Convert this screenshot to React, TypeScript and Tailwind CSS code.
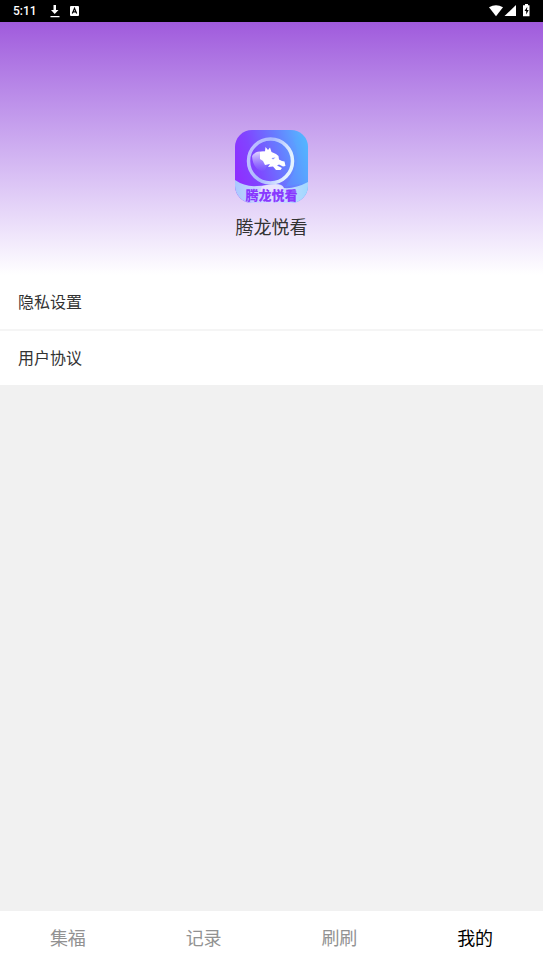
const menuItems = ["隐私设置", "用户协议"];

const tabs = [
  { label: "集福", active: false },
  { label: "记录", active: false },
  { label: "刷刷", active: false },
  { label: "我的", active: true },
];

function StatusBar() {
  return (
    <div className="flex h-[22px] shrink-0 items-center justify-between bg-black px-3 text-white">
      <div className="flex items-center">
        <span className="w-9 pl-px font-['Roboto',sans-serif] text-[12px] leading-6 font-medium">5:11</span>
        <svg width="12" height="14" viewBox="0 0 12 14" fill="currentColor" aria-hidden="true">
          <path d="M5.500 1h2.500v5h2.500L6.700 10 3 6h2.500zM2.500 12h9v1.200h-9z" />
        </svg>
        <svg className="ml-2.5" width="9" height="10" viewBox="0 0 9 10" aria-hidden="true">
          <rect width="9" height="10" rx="1" fill="currentColor" />
          <path d="M2.300 7.600 4.500 2.300 6.700 7.600M3.200 5.900H5.800" fill="none" stroke="#000" strokeWidth="1.200" />
        </svg>
      </div>
      <svg width="44" height="14" viewBox="0 0 44 14" fill="currentColor" aria-hidden="true">
        <path d="M2 3.300Q9 -.9 16 3.300L9 12.200z" />
        <path d="M29 1v11H17.500z" />
        <path d="M38 0h3v1.200h1.500v11H36V1.200h2z" />
        <path d="M40.300 2.800 37.500 7h1.700v3.600l2.500-4.500H40z" fill="#000" />
      </svg>
    </div>
  );
}

function Logo() {
  return (
    <svg width="73" height="73" viewBox="0 0 73 73" role="img" aria-label="腾龙悦看">
      <defs>
        <linearGradient id="tile" x1="0" y1="0.500" x2="1" y2="0.200">
          <stop offset="0" stopColor="#8e30ff" />
          <stop offset="0.250" stopColor="#8144ff" />
          <stop offset="0.620" stopColor="#677cff" />
          <stop offset="1" stopColor="#55b8ff" />
        </linearGradient>
        <linearGradient id="ring" x1="0" y1="0" x2="1" y2="0.300">
          <stop offset="0" stopColor="#c4c0ff" />
          <stop offset="0.500" stopColor="#a9baff" />
          <stop offset="1" stopColor="#e3f2ff" />
        </linearGradient>
        <linearGradient id="mane" x1="0.300" y1="0" x2="0.400" y2="1">
          <stop offset="0" stopColor="#e6dcff" />
          <stop offset="1" stopColor="#a795ff" stopOpacity="0" />
        </linearGradient>
        <linearGradient id="wave" x1="0" y1="0" x2="1" y2="0">
          <stop offset="0" stopColor="#a9c9ff" />
          <stop offset="0.500" stopColor="#ddd9ff" />
          <stop offset="1" stopColor="#a1d8ff" />
        </linearGradient>
        <clipPath id="corners">
          <rect width="73" height="73" rx="17" />
        </clipPath>
      </defs>
      <g clipPath="url(#corners)">
        <path d="M0 0h73v73H0z" fill="url(#tile)" />
        <path d="M58 10Q70 30 50 57l23-5V0z" fill="#50b0ff" opacity="0.250" />
        <path d="M0 50Q10 57 22 56 27 56 32 55 47 52 49 58 60 59 73 52v21H0z" fill="url(#wave)" />
        <path d="M27 56Q47 52 49 59L25 62z" fill="#f0e7ff" opacity="0.700" />
        <circle cx="35.500" cy="31" r="22" fill="none" stroke="url(#ring)" strokeWidth="3.500" />
        <path d="M17 26Q20 20.500 31 21.500L33 34 29 42Q18 40 17 26z" fill="url(#mane)" />
        <path d="M25 22 30 21.500 30.500 17 33 20 35 17.500 36.500 22 41 24 43.500 26 44 29.500 47 31 49.500 31.500 50.500 36 48 36.500 44 34.500 42 35.500 47 38 45.500 40 41 40 38 36.500 33 37 35 34 30 35 28 31 25 29z" fill="#fff" />
        <path d="m36.500 28 4-.5-2.500 2z" fill="#8795ff" />
        <text x="36.500" y="69.500" textAnchor="middle" fontSize="13" fontWeight="900" fill="#8938ff" fontFamily="'Noto Sans CJK SC', sans-serif">腾龙悦看</text>
      </g>
    </svg>
  );
}

export default function App() {
  return (
    <div className="flex min-h-screen flex-col bg-[#f1f1f1] font-['Noto_Sans_CJK_SC',sans-serif] text-[#333]">
      <StatusBar />
      <header className="flex flex-col items-center bg-linear-to-b from-[#a05adc] to-white pt-27 pb-8">
        <Logo />
        <h1 className="mt-2 pb-0.5 text-[18px] leading-[30px]">腾龙悦看</h1>
      </header>
      <main className="flex-1">
        <ul className="divide-y-2 divide-[#f5f5f5] bg-white">
          {menuItems.map((item) => (
            <li key={item}>
              <button type="button" className="block h-[54px] w-full px-[18px] pb-0.5 text-left text-[16px] leading-6">
                {item}
              </button>
            </li>
          ))}
        </ul>
      </main>
      <nav className="grid h-[54px] shrink-0 grid-cols-4 bg-white text-[18px]">
        {tabs.map((tab) => (
          <button
            key={tab.label}
            type="button"
            aria-current={tab.active ? "page" : undefined}
            className={tab.active ? "pb-0.5 text-black" : "pb-0.5 text-[#929292]"}
          >
            {tab.label}
          </button>
        ))}
      </nav>
    </div>
  );
}
